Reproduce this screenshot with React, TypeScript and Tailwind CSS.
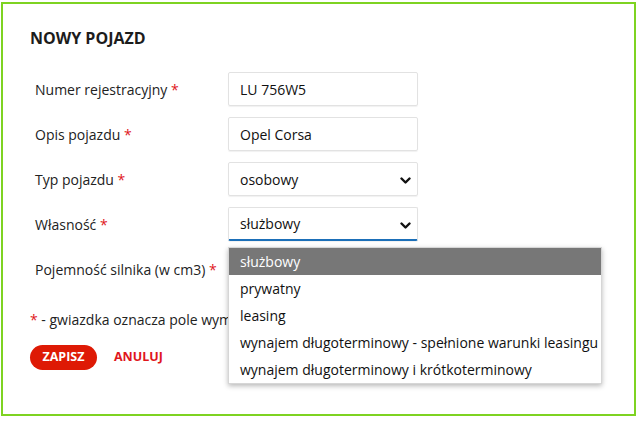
import React from 'react';

const font = { fontFamily: '"Open Sans", "Liberation Sans", sans-serif' };

const fields = [
  { label: 'Numer rejestracyjny', value: 'LU 756W5', kind: 'text' },
  { label: 'Opis pojazdu', value: 'Opel Corsa', kind: 'text' },
  { label: 'Typ pojazdu', value: 'osobowy', kind: 'select' },
  { label: 'Własność', value: 'służbowy', kind: 'select', focused: true },
  { label: 'Pojemność silnika (w cm3)', value: '', kind: 'text' },
];

const options = [
  'służbowy',
  'prywatny',
  'leasing',
  'wynajem długoterminowy - spełnione warunki leasingu',
  'wynajem długoterminowy i krótkoterminowy',
];

function Chevron() {
  return (
    <svg width="11" height="8" viewBox="0 0 11 8" className="absolute right-[6px] top-[14px]">
      <path d="M1.5 1.5 L5.5 5.5 L9.5 1.5" fill="none" stroke="#111" strokeWidth="2.4" strokeLinecap="round" strokeLinejoin="round" />
    </svg>
  );
}

export default function App() {
  return (
    <div className="bg-white w-[639px] h-[421px] pt-[2px] pl-[1px]" style={font}>
      <div className="relative w-[635px] h-[414px] border-2 border-[#7ed321] pl-[27px] pt-[23px]">
        <h1 className="text-[16px] leading-[22px] font-bold text-[#1c1c1c]">NOWY POJAZD</h1>

        <div className="mt-[23px] flex flex-col gap-[11px]">
          {fields.map((f) => (
            <div key={f.label} className="flex items-center h-[34px]">
              <div className="w-[198px] shrink-0 pl-[5px] text-[14px] text-[#222] whitespace-nowrap">
                {f.label} <span className="text-[#e0161c]">*</span>
              </div>
              <div
                className={
                  'relative w-[190px] h-[34px] rounded-[2px] border border-[#e2e2e2] shadow-[0_1px_1px_rgba(0,0,0,0.06)] flex items-center pl-[11px] text-[14px] text-[#111] ' +
                  (f.focused ? 'border-b-2 border-b-[#1b6fb8]' : '')
                }
              >
                {f.value}
                {f.kind === 'select' && <Chevron />}
              </div>
            </div>
          ))}
        </div>

        <p className="mt-[24px] text-[14px] leading-[20px] text-[#222] whitespace-nowrap">
          <span className="text-[#e0161c]">*</span> - gwiazdka oznacza pole wymagane
        </p>

        <div className="mt-[15px] flex items-center gap-[17px]">
          <button className="w-[67px] h-[25px] rounded-full bg-[#de1a05] text-white text-[12.5px] font-bold">ZAPISZ</button>
          <button className="text-[#e0161c] text-[12.5px] font-bold">ANULUJ</button>
        </div>

        <div className="absolute left-[225px] top-[243px] w-[374px] bg-white border border-[#d6d6d6] shadow-[0_2px_5px_rgba(0,0,0,0.28)]">
          {options.map((o, i) => (
            <div
              key={o}
              className={
                'h-[27px] flex items-center pl-[11px] text-[14px] whitespace-nowrap ' +
                (i === 0 ? 'bg-[#777777] text-white' : 'text-[#111]')
              }
            >
              {o}
            </div>
          ))}
        </div>
      </div>
    </div>
  );
}
